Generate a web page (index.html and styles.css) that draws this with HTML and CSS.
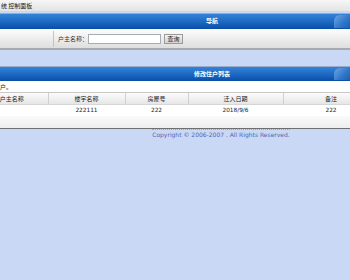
FILE: index.html
```html
<!DOCTYPE html>
<html lang="zh-CN">
<head>
  <meta charset="UTF-8">
  <title>修改住户列表</title>
  <link rel="stylesheet" href="styles.css">
</head>
<body>
  <div class="topbar">统 控制面板</div>

  <div class="panel">
    <div class="panel-head">
      <span class="panel-title">导航</span>
      <span class="corner"></span>
    </div>
    <div class="search-row">
      <span class="search-sep"></span>
      <label class="search-label" for="owner">户主名称：</label>
      <input class="search-input" id="owner" type="text">
      <button class="search-btn" type="button">查询</button>
    </div>
  </div>

  <div class="panel list-panel">
    <div class="panel-head">
      <span class="panel-title">修改住户列表</span>
      <span class="corner"></span>
    </div>
    <div class="tip">户。</div>
    <table class="grid">
      <thead>
        <tr>
          <th class="c1">户主名称</th>
          <th class="c2">楼宇名称</th>
          <th class="c3">房屋号</th>
          <th class="c4">迁入日期</th>
          <th class="c5">备注</th>
        </tr>
      </thead>
      <tbody>
        <tr>
          <td></td>
          <td>222111</td>
          <td>222</td>
          <td>2018/9/6</td>
          <td>222</td>
        </tr>
      </tbody>
    </table>
    <div class="list-foot"></div>
  </div>

  <div class="footer">
    <span class="copyright">Copyright &copy; 2006-2007 . All Rights Reserved.</span>
  </div>
</body>
</html>
```

FILE: styles.css
```css
:root {
  --page-bg: #c9d8f4;
  --head-top: #3583d6;
  --head-bottom: #0a4ea6;
  --text-color: #222222;
  --copy-color: #5565b0;
}

* {
  margin: 0;
  padding: 0;
  box-sizing: border-box;
}

body {
  width: 350px;
  height: 280px;
  overflow: hidden;
  background-color: var(--page-bg);
  font-family: "Noto Sans CJK SC", "DejaVu Sans", sans-serif;
  font-size: 6px;
  color: var(--text-color);
}

.topbar {
  height: 12px;
  line-height: 11px;
  padding-left: 1px;
  background: linear-gradient(#f7f7f7, #e4e4e4);
  border-bottom: 1px solid #d0d6e2;
  white-space: nowrap;
}

.panel {
  margin-top: 1px;
}

.panel-head {
  display: flex;
  height: 16px;
  border-top: 1px solid #9aaccb;
  background: linear-gradient(var(--head-top), #1b67c2 55%, var(--head-bottom));
}

.panel-title {
  flex: 1;
  padding-left: 90px;
  text-align: center;
  line-height: 14px;
  color: #ffffff;
  font-weight: bold;
}

.corner {
  width: 16px;
  margin: 1px 0;
  border-radius: 6px 0 0 0;
  background: linear-gradient(135deg, #6fa6e3, #2f76c9 60%, #1c5fb2);
}

.search-row {
  display: flex;
  align-items: center;
  height: 21px;
  background: linear-gradient(#fdfdfd, #dedede);
  border-bottom: 2px solid #a9a9a9;
}

.search-sep {
  width: 1px;
  height: 16px;
  margin-left: 53px;
  background-color: #c4c4c4;
}

.search-label {
  margin-left: 4px;
  width: 30px;
  color: #333333;
}

.search-input {
  width: 73px;
  height: 10px;
  border: 1px solid #a5acb5;
  background-color: #ffffff;
}

.search-btn {
  width: 19px;
  height: 10px;
  margin-left: 3px;
  border: 1px solid #9a9a9a;
  background: linear-gradient(#f2f2f2, #d4d4d4);
  font-family: inherit;
  font-size: 6px;
  line-height: 8px;
  color: #222222;
}

.list-panel {
  margin-top: 16px;
}

.list-panel .panel-head {
  height: 15px;
}

.tip {
  height: 12px;
  line-height: 11px;
  background-color: #ffffff;
  border-bottom: 1px solid #c8c8c8;
  white-space: nowrap;
}

.grid {
  margin-left: -24px;
  width: 403px;
  border-collapse: collapse;
  table-layout: fixed;
  background-color: #ffffff;
}

.grid th {
  height: 11px;
  font-weight: normal;
  background: linear-gradient(#fbfbfb, #e6e6e6);
  border-right: 1px solid #d0d0d0;
  border-bottom: 1px solid #d6d6d6;
}

.grid td {
  height: 12px;
  text-align: center;
  font-family: "DejaVu Sans", sans-serif;
  font-size: 5.8px;
}

.c1 { width: 72px; }
.c2 { width: 77px; }
.c3 { width: 63px; }
.c4 { width: 95px; }
.c5 { width: 96px; }

.list-foot {
  height: 13px;
  background: linear-gradient(#fafafa, #eeeeee);
  border-bottom: 1px solid #6f6f6f;
}

.footer {
  padding-left: 92px;
  text-align: center;
}

.copyright {
  display: inline-block;
  border-top: 1px dotted #93a6dc;
  padding-top: 1px;
  font-family: "DejaVu Sans", sans-serif;
  font-size: 6px;
  color: var(--copy-color);
}
```
